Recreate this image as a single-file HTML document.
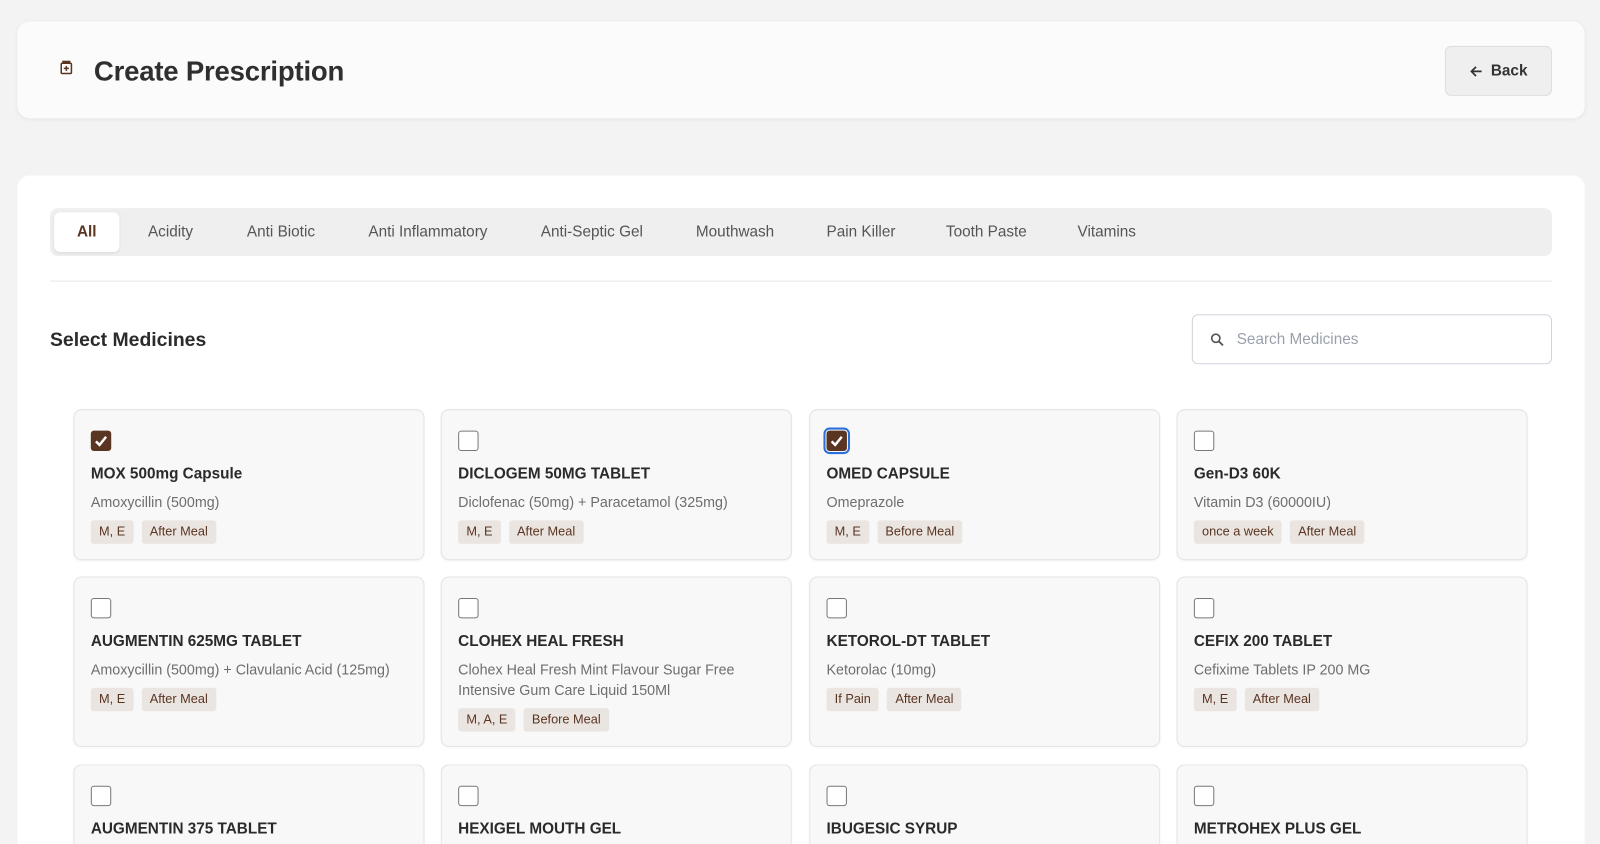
<!DOCTYPE html>
<html><head><meta charset="utf-8"><style>
*{box-sizing:border-box;margin:0;padding:0}
html,body{width:1600px;height:844px;overflow:hidden}
body{background:#f3f3f3;font-family:"Liberation Sans",sans-serif;color:#2b2b2b}
#w{position:absolute;left:0;top:0;width:1568px;height:827px;overflow:hidden;transform:scale(1.0204);transform-origin:0 0}
.hdr{position:absolute;left:17px;top:21px;width:1536px;height:95px;background:#fbfbfb;border-radius:12px;box-shadow:0 1px 4px rgba(0,0,0,.06)}
.hdr h1{position:absolute;left:75px;top:34px;font-size:27px;font-weight:600;color:#2f2f2f;letter-spacing:-.2px}
.hdr .ic{position:absolute;left:42px;top:38px}
.back{position:absolute;right:32px;top:24px;width:105px;height:49px;border:1px solid #dedede;border-radius:6px;background:#efefef;font-size:15px;font-weight:600;color:#333;display:flex;align-items:center;justify-content:center;gap:8px}
.main{position:absolute;left:17px;top:172px;width:1536px;height:655px;background:#fff;border-radius:12px 12px 0 0}
.tabs{position:absolute;left:32px;top:32px;width:1472px;height:47px;background:#efefef;border-radius:8px}
.tab{position:absolute;top:4px;height:39px;line-height:39px;font-size:15px;color:#555}
.tab.a{background:#fff;border-radius:6px;color:#5a3522;font-weight:600;width:64px;text-align:center;left:4px;box-shadow:0 1px 3px rgba(0,0,0,.08)}
.div{position:absolute;left:32px;top:103px;width:1472px;height:1px;background:#e6e6e6}
.sel{position:absolute;left:32px;top:151px;font-size:19px;font-weight:600;color:#2b2b2b}
.search{position:absolute;left:1151px;top:136px;width:353px;height:49px;border:1.5px solid #cfd3db;border-radius:6px;display:flex;align-items:center;padding-left:17px;gap:12px;font-size:15px;color:#9aa0ab}
.card{position:absolute;width:344px;background:#f8f8f8;border:1px solid #e3e3e3;border-radius:8px;padding:20px 16px 0 16px;box-shadow:0 1px 2px rgba(0,0,0,.04)}
.cb{width:20px;height:20px;border:1.5px solid #777;border-radius:3px;background:#fff}
.cb.on{background:#5a3522;border-color:#5a3522;display:flex;align-items:center;justify-content:center}
.cb.f{outline:2px solid #2a6fdb;outline-offset:1px}
.t{margin-top:13px;font-size:15px;font-weight:600;color:#2a2a2a;line-height:20px}
.s{margin-top:7px;font-size:14px;color:#6e6e6e;line-height:20px}
.tags{margin-top:8px;display:flex;gap:8px}
.tg{background:#ebe5e1;color:#5a3522;font-size:12.5px;height:23px;line-height:23px;padding:0 8px;border-radius:3px}
</style></head><body><div id="w">
<div class="hdr">
<svg class="ic" width="12" height="14" viewBox="0 0 12 14"><rect x="1" y="3" width="10" height="10" rx="1" fill="none" stroke="#5a3522" stroke-width="1.5"/><rect x="2" y="0.5" width="8" height="2" fill="#5a3522"/><path d="M6 5.5v5M3.5 8h5" stroke="#5a3522" stroke-width="1.5"/></svg>
<h1>Create Prescription</h1>
<div class="back"><svg width="13" height="12" viewBox="0 0 13 12"><path d="M12 6H2M6.5 1.5L2 6l4.5 4.5" fill="none" stroke="#333" stroke-width="1.7"/></svg>Back</div>
</div>
<div class="main">
<div class="tabs">
<div class="tab a">All</div>
<div class="tab" style="left:96px">Acidity</div>
<div class="tab" style="left:193px">Anti Biotic</div>
<div class="tab" style="left:312px">Anti Inflammatory</div>
<div class="tab" style="left:481px">Anti-Septic Gel</div>
<div class="tab" style="left:633px">Mouthwash</div>
<div class="tab" style="left:761px">Pain Killer</div>
<div class="tab" style="left:878px">Tooth Paste</div>
<div class="tab" style="left:1007px">Vitamins</div>
</div>
<div class="div"></div>
<div class="sel">Select Medicines</div>
<div class="search"><svg width="14" height="14" viewBox="0 0 14 14"><circle cx="5.5" cy="5.5" r="4" fill="none" stroke="#555" stroke-width="1.6"/><path d="M8.5 8.5l4 4" stroke="#555" stroke-width="1.8"/></svg>Search Medicines</div>
</div>

<div class="card" style="left:72px;top:401px;height:148px"><div class="cb on"><svg width="14" height="12" viewBox="0 0 14 12"><path d="M2 6.5l3.5 3.5L12 2" fill="none" stroke="#fff" stroke-width="2.4"/></svg></div><div class="t">MOX 500mg Capsule</div><div class="s">Amoxycillin (500mg)</div><div class="tags"><span class="tg">M, E</span><span class="tg">After Meal</span></div></div>
<div class="card" style="left:432px;top:401px;height:148px"><div class="cb"></div><div class="t">DICLOGEM 50MG TABLET</div><div class="s">Diclofenac (50mg) + Paracetamol (325mg)</div><div class="tags"><span class="tg">M, E</span><span class="tg">After Meal</span></div></div>
<div class="card" style="left:793px;top:401px;height:148px"><div class="cb on f"><svg width="14" height="12" viewBox="0 0 14 12"><path d="M2 6.5l3.5 3.5L12 2" fill="none" stroke="#fff" stroke-width="2.4"/></svg></div><div class="t">OMED CAPSULE</div><div class="s">Omeprazole</div><div class="tags"><span class="tg">M, E</span><span class="tg">Before Meal</span></div></div>
<div class="card" style="left:1153px;top:401px;height:148px"><div class="cb"></div><div class="t">Gen-D3 60K</div><div class="s">Vitamin D3 (60000IU)</div><div class="tags"><span class="tg">once a week</span><span class="tg">After Meal</span></div></div>

<div class="card" style="left:72px;top:565px;height:167px"><div class="cb"></div><div class="t">AUGMENTIN 625MG TABLET</div><div class="s">Amoxycillin (500mg) + Clavulanic Acid (125mg)</div><div class="tags"><span class="tg">M, E</span><span class="tg">After Meal</span></div></div>
<div class="card" style="left:432px;top:565px;height:167px"><div class="cb"></div><div class="t">CLOHEX HEAL FRESH</div><div class="s">Clohex Heal Fresh Mint Flavour Sugar Free Intensive Gum Care Liquid 150Ml</div><div class="tags"><span class="tg">M, A, E</span><span class="tg">Before Meal</span></div></div>
<div class="card" style="left:793px;top:565px;height:167px"><div class="cb"></div><div class="t">KETOROL-DT TABLET</div><div class="s">Ketorolac (10mg)</div><div class="tags"><span class="tg">If Pain</span><span class="tg">After Meal</span></div></div>
<div class="card" style="left:1153px;top:565px;height:167px"><div class="cb"></div><div class="t">CEFIX 200 TABLET</div><div class="s">Cefixime Tablets IP 200 MG</div><div class="tags"><span class="tg">M, E</span><span class="tg">After Meal</span></div></div>

<div class="card" style="left:72px;top:749px;height:78px;border-bottom:none;border-radius:8px 8px 0 0"><div class="cb"></div><div class="t">AUGMENTIN 375 TABLET</div></div>
<div class="card" style="left:432px;top:749px;height:78px;border-bottom:none;border-radius:8px 8px 0 0"><div class="cb"></div><div class="t">HEXIGEL MOUTH GEL</div></div>
<div class="card" style="left:793px;top:749px;height:78px;border-bottom:none;border-radius:8px 8px 0 0"><div class="cb"></div><div class="t">IBUGESIC SYRUP</div></div>
<div class="card" style="left:1153px;top:749px;height:78px;border-bottom:none;border-radius:8px 8px 0 0"><div class="cb"></div><div class="t">METROHEX PLUS GEL</div></div>
</div></body></html>
